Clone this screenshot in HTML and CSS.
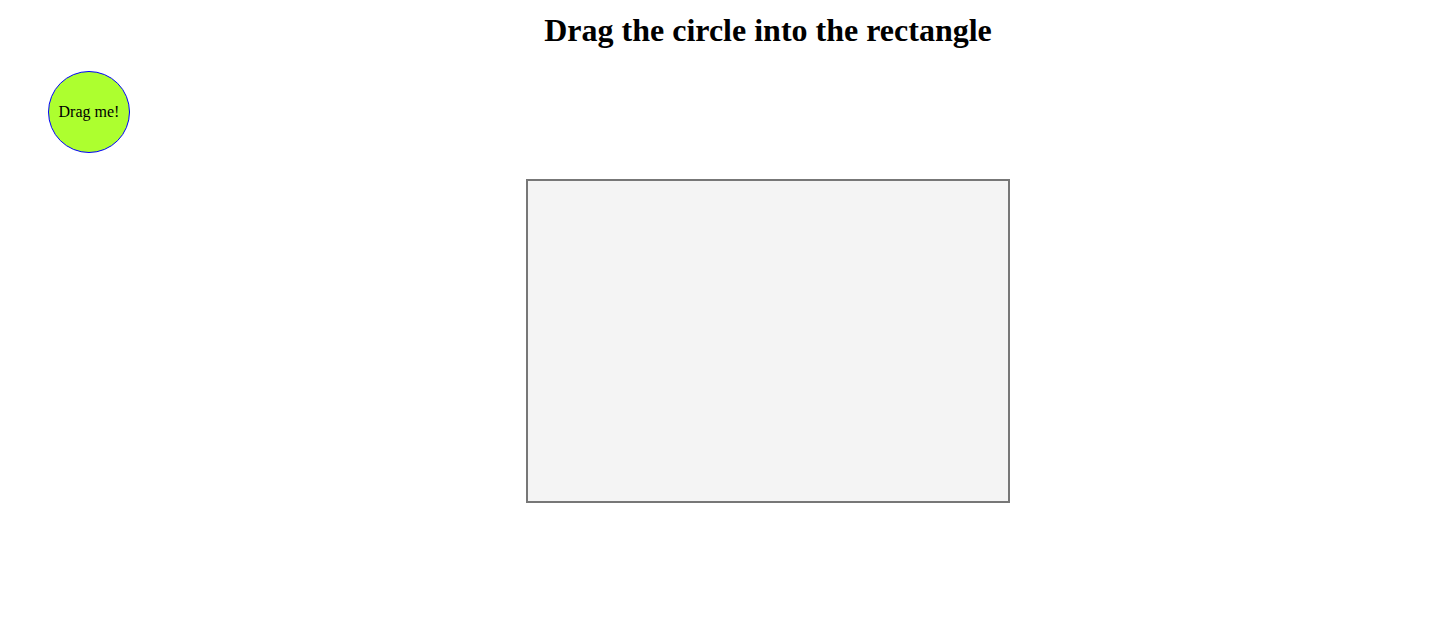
FILE: index.html
```html
<!DOCTYPE html>
<html>
<head>
<meta charset="utf-8">
<title>Drag</title>
<link rel="stylesheet" href="styles.css">
</head>
<body>
<div class="page">
  <h1 class="title">Drag the circle into the rectangle</h1>
  <div class="circle">Drag me!</div>
  <div class="zone-wrap">
    <div class="dropzone"></div>
  </div>
</div>
</body>
</html>
```
FILE: styles.css
```css
html, body {
  margin: 0;
  background: #fff;
}
.page {
  font-family: "Liberation Serif", "Times New Roman", serif;
  color: #000;
}
.title {
  margin: 12px 0 0;
  padding-left: 96px;
  text-align: center;
  font-size: 32px;
  font-weight: bold;
  line-height: 37px;
}
.circle {
  margin: 22px 0 0 48px;
  width: 80px;
  height: 80px;
  border: 1px solid #0000ff;
  border-radius: 50%;
  background: #adff2f;
  display: flex;
  align-items: center;
  justify-content: center;
  font-size: 16px;
}
.zone-wrap {
  padding-left: 96px;
  margin-top: 26px;
}
.dropzone {
  margin: 0 auto;
  width: 480px;
  height: 320px;
  border: 2px solid #777;
  background: #f4f4f4;
}
```
